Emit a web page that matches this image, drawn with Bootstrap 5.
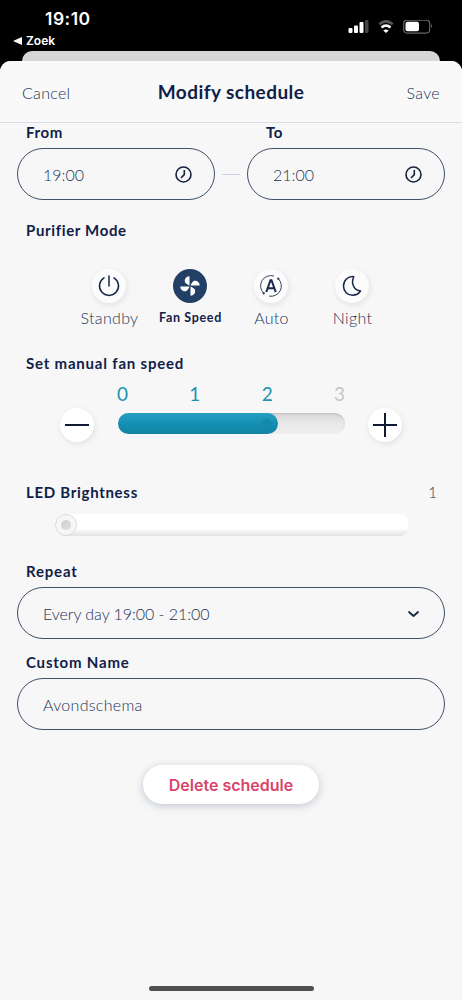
<!DOCTYPE html>
<html lang="en">
<head>
<meta charset="utf-8">
<meta name="viewport" content="width=device-width, initial-scale=1">
<title>Modify schedule</title>
<link href="https://cdn.jsdelivr.net/npm/bootstrap@5.3.0/dist/css/bootstrap.min.css" rel="stylesheet">
<style>
  :root { --navy: #0f2148; --slate: #1c3358; --teal: #1b93b3; --page: #f7f7f7; }
  html, body { height: 100%; }
  body { background: #000; font-family: Lato, sans-serif; color: var(--navy); overflow: hidden; }
  svg { display: block; flex: none; }
  .phone { height: 1000px; }
  .statusbar { height: 50px; color: #fff; font-family: Inter, sans-serif; }
  .clock { font-size: 17.5px; font-weight: 600; line-height: 20px; letter-spacing: .5px; padding: 9px 0 0 45px; }
  .backlink { font-size: 12px; font-weight: 600; line-height: 15px; padding: 4px 0 0 13px; gap: 4px; }
  .signals { padding: 20px 29px 0 0; gap: 9px; }
  .sheet-behind { height: 12px; margin: 1px 22px 0; background: #d6d6d6; border-radius: 10px 10px 0 0; }
  .sheet { background: var(--page); border-radius: 11px 11px 0 0; margin-top: -2px; position: relative; }
  .titlebar { height: 62px; padding: 0 22px; border-bottom: 1px solid #dcdde3; background: #f9f9f9; border-radius: 11px 11px 0 0; }
  .titlebar h1 { font-size: 19px; font-weight: 700; margin: 2px 0 0; letter-spacing: .45px; }
  .plain { background: none; border: 0; padding: 2px 0 0; color: var(--slate); font-size: 16px; font-weight: 300; width: 60px; letter-spacing: .3px; }
  .heading { font-size: 15px; font-weight: 700; line-height: 18px; letter-spacing: .65px; margin: 0 0 7px; padding-left: 9px; }
  .heading-to { padding-left: 19px; }
  .content { padding: 0 17px; }
  .pill { height: 52px; border: 1px solid #41506a; border-radius: 26px; padding: 1px 22px 0 25px; color: var(--slate); font-size: 16px; font-weight: 300; }
  .every { letter-spacing: -.05px; }
  .avond { letter-spacing: .3px; }
  .timebox { width: 198px; }
  .joiner { width: 18px; height: 1px; background: #d0d1e0; margin-top: 26px; }
  .purifier { margin: 21px 0 0; }
  .modes { margin-top: 30px; }
  .mode { width: 81px; line-height: 20px; font-size: 16px; font-weight: 300; letter-spacing: .3px; color: var(--slate); gap: 5px; }
  .round { width: 34px; height: 34px; border-radius: 50%; background: #fcfcfc; box-shadow: 1px 2px 6px rgba(0,0,0,.09); }
  .mode .round { margin-right: 1px; }
  .mode.active { font-size: 12.5px; font-weight: 700; color: var(--navy); letter-spacing: .65px; }
  .mode.active .round { background: #223f66; box-shadow: none; }
  .fanhead { margin: 26px 0 0; letter-spacing: .8px; }
  .fanrow { margin-top: 11px; padding-left: 43px; }
  .fanmid { width: 227px; margin: 0 23px 0 24px; }
  .step { border: 0; padding: 0; background: #fff; margin-top: 25px; }
  .ticks { font-size: 19px; font-weight: 400; line-height: 22px; color: var(--teal); margin: 0 0 8px -1px; }
  .tick-off { color: #c4c6c8; }
  .fan-track { height: 21px; border-radius: 11px; background: linear-gradient(#d6d6d6, #e6e6e6 40%, #efefef); box-shadow: inset 0 1px 2px rgba(0,0,0,.12); }
  .fan-fill { height: 21px; border-radius: 11px; background: linear-gradient(#25a0c2, #128db0 60%, #1584a3); }
  .fan-dot { width: 10px; height: 10px; border-radius: 50%; background: #1589aa; margin-right: 6px; }
  .ledhead { margin-top: 41px; padding-right: 8px; }
  .ledhead .heading { margin: 0; letter-spacing: .7px; }
  .ledval { font-size: 15px; font-weight: 300; line-height: 18px; color: var(--slate); }
  .led-track { height: 22px; margin: 13px 37px 0 38px; border-radius: 11px 8px 8px 11px; background: linear-gradient(#fff 65%, #e2e2e2); }
  .led-knob { width: 22px; height: 22px; border-radius: 50%; background: #f6f6f6; border: 1px solid #dcdcdc; }
  .led-knob span { width: 10px; height: 10px; border-radius: 50%; background: linear-gradient(135deg, #cecece, #dedede); }
  .repeat { margin-top: 26px; letter-spacing: .8px; }
  .custom { margin-top: 14px; letter-spacing: .8px; }
  .delete { width: 176px; height: 39px; margin-top: 35px; border-radius: 20px; border: 0; background: #fff; color: #d94469; font-family: Inter, sans-serif; font-size: 16px; font-weight: 600; box-shadow: 0 2px 8px rgba(40,60,110,.25); }
  .home { width: 165px; height: 5px; border-radius: 3px; background: #505050; margin-bottom: 9px; }
</style>
</head>
<body>
<div class="phone d-flex flex-column">
  <header class="statusbar d-flex justify-content-between flex-shrink-0">
    <div>
      <div class="clock">19:10</div>
      <div class="backlink d-flex align-items-center">
        <svg width="9" height="8"><path d="M9 0V8L0 4Z" fill="#fff"/></svg><span>Zoek</span>
      </div>
    </div>
    <div class="signals d-flex">
      <svg width="22" height="16"><g fill="#fff"><rect x="1.500" y="8" width="4" height="5" rx="1"/><rect x="7" y="5.500" width="4" height="7.500" rx="1"/><rect x="12.500" y="2" width="4" height="11" rx="1"/></g><rect x="18" y="0" width="3.500" height="13" rx="1" fill="#444"/></svg>
      <svg width="16" height="16" fill="none"><path d="M1.300 4.300Q8 -1.700 14.700 4.300" stroke="#555" stroke-width="2.600"/><path d="M3.500 7.500Q8 3.500 12.500 7.500" stroke="#fff" stroke-width="2.600"/><path d="M8 13L5.300 10.500Q8 8.300 10.700 10.500Z" fill="#fff"/></svg>
      <svg width="30" height="16"><rect x=".700" y=".100" width="26" height="13" rx="3.500" fill="none" stroke="#666" stroke-width="1.200"/><rect x="2.500" y="1.700" width="13.500" height="9.500" rx="2" fill="#fff"/><path d="M28 4Q30 6 28 8Z" fill="#666"/></svg>
    </div>
  </header>
  <div class="sheet-behind flex-shrink-0"></div>
  <main class="sheet flex-grow-1 d-flex flex-column">
    <div class="titlebar d-flex align-items-center justify-content-between flex-shrink-0">
      <button class="plain text-start">Cancel</button>
      <h1>Modify schedule</h1>
      <button class="plain text-end">Save</button>
    </div>
    <div class="content">
      <div class="d-flex justify-content-between align-items-center">
        <div class="timebox">
          <h2 class="heading">From</h2>
          <div class="pill d-flex align-items-center justify-content-between">
            <span>19:00</span>
            <svg width="17" height="17" fill="none" stroke="#17243f" stroke-width="1.600"><circle cx="8.500" cy="8.500" r="7.500"/><path d="M9.300 4V8.700L6 11.800"/></svg>
          </div>
        </div>
        <div class="joiner"></div>
        <div class="timebox">
          <h2 class="heading heading-to">To</h2>
          <div class="pill d-flex align-items-center justify-content-between">
            <span>21:00</span>
            <svg width="17" height="17" fill="none" stroke="#17243f" stroke-width="1.600"><circle cx="8.500" cy="8.500" r="7.500"/><path d="M9.300 4V8.700L6 11.800"/></svg>
          </div>
        </div>
      </div>

      <h2 class="heading purifier">Purifier Mode</h2>
      <div class="modes d-flex justify-content-center">
        <div class="mode d-flex flex-column align-items-center">
          <div class="round d-flex align-items-center justify-content-center"><svg width="22" height="22" fill="none" stroke="#17264a" stroke-width="1.500" stroke-linecap="round"><path d="M11 1V11M6 2.800A9.500 9.500 0 1 0 16 2.800"/></svg></div>
          <span>Standby</span>
        </div>
        <div class="mode active d-flex flex-column align-items-center">
          <div class="round d-flex align-items-center justify-content-center"><svg width="22" height="22" viewBox="-11 -11 22 22" fill="#fff"><path id="blade" d="M-.500 -.500V-9.700C-5 -9.700 -6.500 -4.500 -4 -2.500Q-2.500 -1.300 -.500 -.500Z"/><use href="#blade" transform="rotate(90)"/><use href="#blade" transform="rotate(180)"/><use href="#blade" transform="rotate(270)"/></svg></div>
          <span>Fan Speed</span>
        </div>
        <div class="mode d-flex flex-column align-items-center">
          <div class="round d-flex align-items-center justify-content-center"><svg width="24" height="24" viewBox="-12 -12 24 24" fill="none" stroke="#34435f"><path d="M-7.300 7.300A10.300 10.300 0 0 1 3 -9.900M7.300 -7.300A10.300 10.300 0 0 1 -2 10.100" stroke-width="1"/><circle cx="7.300" cy="-7.300" r=".8" fill="#17264a"/><circle cx="-7.300" cy="7.300" r=".8" fill="#17264a"/><path d="M-4.700 6L-.500 -5.800H.500L4.700 6M-3.300 2.200H3.300" stroke="#17264a" stroke-width="2"/></svg></div>
          <span>Auto</span>
        </div>
        <div class="mode d-flex flex-column align-items-center">
          <div class="round d-flex align-items-center justify-content-center"><svg width="20" height="22" fill="none" stroke="#17264a" stroke-width="1.500" stroke-linejoin="round"><path d="M11.700 1.700C6 1 1.500 5.500 1.500 11C1.500 16.500 5.500 20.200 10.500 20.200C14 20.200 16.800 18.600 18.500 16C12.500 15.500 8.500 9 11.700 1.700Z"/></svg></div>
          <span>Night</span>
        </div>
      </div>

      <h2 class="heading fanhead">Set manual fan speed</h2>
      <div class="fanrow d-flex align-items-start">
        <button class="round step d-flex align-items-center justify-content-center"><svg width="24" height="24" stroke="#101a33" stroke-width="2"><path d="M0 12H24"/></svg></button>
        <div class="fanmid">
          <div class="ticks d-flex justify-content-between"><span>0</span><span>1</span><span>2</span><span class="tick-off">3</span></div>
          <div class="fan-track"><div class="fan-fill d-flex align-items-center justify-content-end" style="width:70.5%"><span class="fan-dot"></span></div></div>
        </div>
        <button class="round step d-flex align-items-center justify-content-center"><svg width="24" height="24" stroke="#101a33" stroke-width="2"><path d="M0 12H24M12 0V24"/></svg></button>
      </div>

      <div class="ledhead d-flex justify-content-between">
        <h2 class="heading">LED Brightness</h2><span class="ledval">1</span>
      </div>
      <div class="led-track"><div class="led-knob d-flex align-items-center justify-content-center"><span></span></div></div>

      <h2 class="heading repeat">Repeat</h2>
      <div class="pill d-flex align-items-center justify-content-between">
        <span class="every">Every day 19:00 - 21:00</span>
        <svg width="16" height="10" fill="none" stroke="#17243f" stroke-width="1.800" stroke-linecap="round" stroke-linejoin="round"><path d="M3 3L7.500 7L12 3"/></svg>
      </div>
      <h2 class="heading custom">Custom Name</h2>
      <div class="pill d-flex align-items-center"><span class="avond">Avondschema</span></div>
      <button class="delete d-block mx-auto">Delete schedule</button>
    </div>
    <div class="home mx-auto mt-auto"></div>
  </main>
</div>
<script src="https://cdn.jsdelivr.net/npm/bootstrap@5.3.0/dist/js/bootstrap.bundle.min.js"></script>
</body>
</html>
